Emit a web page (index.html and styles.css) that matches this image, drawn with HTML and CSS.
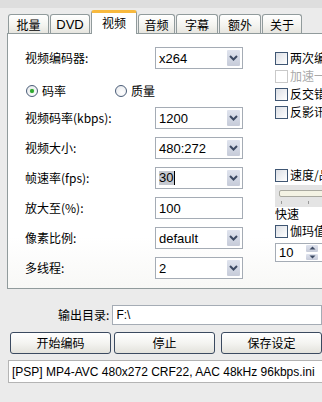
FILE: index.html
```html
<!DOCTYPE html>
<html>
<head>
<meta charset="utf-8">
<link rel="stylesheet" href="styles.css">
</head>
<body>
<div class="window">
  <div class="tabs">
    <div class="tab w41">批量</div>
    <div class="tab w40 latin">DVD</div>
    <div class="tab active">视频</div>
    <div class="tab w37">音频</div>
    <div class="tab w42">字幕</div>
    <div class="tab w42">额外</div>
    <div class="tab w40">关于</div>
  </div>
  <div class="panel">
    <div class="left">
      <div class="row">
        <span class="label">视频编码器:</span>
        <div class="combo"><span class="val">x264</span><span class="btn"><svg width="9" height="6" viewBox="0 0 9 6"><path d="M1 1 L4.5 4.5 L8 1" fill="none" stroke="#3d4a63" stroke-width="2"/></svg></span></div>
      </div>
      <div class="radios">
        <span class="radio on"></span><span class="rlabel">码率</span>
        <span class="radio second"></span><span class="rlabel">质量</span>
      </div>
      <div class="row r1">
        <span class="label">视频码率(kbps):</span>
        <div class="combo"><span class="val">1200</span><span class="btn"><svg width="9" height="6" viewBox="0 0 9 6"><path d="M1 1 L4.5 4.5 L8 1" fill="none" stroke="#3d4a63" stroke-width="2"/></svg></span></div>
      </div>
      <div class="row">
        <span class="label">视频大小:</span>
        <div class="combo"><span class="val">480:272</span><span class="btn"><svg width="9" height="6" viewBox="0 0 9 6"><path d="M1 1 L4.5 4.5 L8 1" fill="none" stroke="#3d4a63" stroke-width="2"/></svg></span></div>
      </div>
      <div class="row">
        <span class="label">帧速率(fps):</span>
        <div class="combo"><span class="val"><span class="sel">30</span><span class="caret"></span></span><span class="btn"><svg width="9" height="6" viewBox="0 0 9 6"><path d="M1 1 L4.5 4.5 L8 1" fill="none" stroke="#3d4a63" stroke-width="2"/></svg></span></div>
      </div>
      <div class="row">
        <span class="label">放大至(%):</span>
        <div class="combo"><span class="val">100</span></div>
      </div>
      <div class="row">
        <span class="label">像素比例:</span>
        <div class="combo"><span class="val">default</span><span class="btn"><svg width="9" height="6" viewBox="0 0 9 6"><path d="M1 1 L4.5 4.5 L8 1" fill="none" stroke="#3d4a63" stroke-width="2"/></svg></span></div>
      </div>
      <div class="row">
        <span class="label">多线程:</span>
        <div class="combo"><span class="val">2</span><span class="btn"><svg width="9" height="6" viewBox="0 0 9 6"><path d="M1 1 L4.5 4.5 L8 1" fill="none" stroke="#3d4a63" stroke-width="2"/></svg></span></div>
      </div>
    </div>
    <div class="right">
      <div class="chk"><span class="box"></span><span>两次编码</span></div>
      <div class="chk disabled"><span class="box"></span><span>加速一次</span></div>
      <div class="chk"><span class="box"></span><span>反交错</span></div>
      <div class="chk"><span class="box"></span><span>反影讯</span></div>
      <div class="chk speed"><span class="box"></span><span>速度/品质</span></div>
      <div class="slider">
        <div class="track"></div>
        <div class="ticks"><span class="tick t1"></span><span class="tick t2"></span></div>
      </div>
      <div class="fast">快速</div>
      <div class="chk gamma"><span class="box"></span><span>伽玛值</span></div>
      <div class="spin"><span class="val">10</span><span class="spinbtn"><span class="up"><svg width="7" height="4" viewBox="0 0 7 4"><path d="M0.5 3.5 L3.5 0.5 L6.5 3.5Z" fill="#3d4a63"/></svg></span><span class="dn"><svg width="7" height="4" viewBox="0 0 7 4"><path d="M0.5 0.5 L3.5 3.5 L6.5 0.5Z" fill="#3d4a63"/></svg></span></span></div>
    </div>
  </div>
  <div class="outrow">
    <span class="outlabel">输出目录:</span>
    <div class="outinput">F:\</div>
  </div>
  <div class="buttons">
    <div class="button">开始编码</div>
    <div class="button b2">停止</div>
    <div class="button b3">保存设定</div>
  </div>
  <div class="preset">[PSP] MP4-AVC 480x272 CRF22, AAC 48kHz 96kbps.ini</div>
</div>
</body>
</html>
```
FILE: styles.css
```css
* { box-sizing: border-box; }
html, body { margin: 0; padding: 0; }
body {
  font-family: "Liberation Sans", "Noto Sans CJK SC", sans-serif;
  font-size: 12px;
  color: #000;
}
.window {
  width: 322px;
  height: 402px;
  overflow: hidden;
  background: #ebebeb;
  border-top: 8px solid #dedede;
  padding-top: 2px;
}
.tabs {
  display: flex;
  align-items: flex-end;
  gap: 1px;
  padding-left: 8px;
  height: 23px;
  position: relative;
  z-index: 2;
}
.tab {
  height: 19px;
  border: 1px solid #919b9c;
  border-bottom: none;
  border-radius: 3px 3px 0 0;
  background: linear-gradient(#ffffff, #f3f3ef 60%, #e6e5df);
  display: flex;
  align-items: center;
  justify-content: center;
  font-family: "Noto Sans CJK SC", sans-serif;
  font-size: 12px;
  line-height: 1;
  padding-top: 1px;
}
.tab.latin { font-family: "Liberation Sans", sans-serif; font-size: 13px; }
.w41 { width: 41px; }
.w40 { width: 40px; }
.w37 { width: 37px; }
.w42 { width: 42px; }
.tab.active {
  width: 46px;
  height: 24px;
  margin-bottom: -1px;
  background: #fff;
  border-top: 3px solid #f8b93e;
  border-radius: 3px 3px 0 0;
  padding-top: 0;
  padding-bottom: 2px;
}
.panel {
  margin-left: 7px;
  width: 340px;
  height: 256px;
  border: 1px solid #919b9c;
  background: linear-gradient(#ffffff, #ffffff 80%, #f8f8f6);
  display: flex;
  position: relative;
  z-index: 1;
}
.left {
  width: 267px;
  padding-left: 17px;
  padding-top: 13px;
  display: flex;
  flex-direction: column;
}
.row {
  display: flex;
  align-items: center;
  height: 22px;
  margin-bottom: 8px;
}
.row.r1 { margin-top: 5px; }
.label {
  width: 130px;
  font-family: "Noto Sans CJK SC", sans-serif;
  font-size: 12px;
  line-height: 1;
}
.combo {
  width: 88px;
  height: 22px;
  border: 1px solid #a5acb5;
  background: #fff;
  display: flex;
  align-items: stretch;
}
.combo .val {
  flex: 1;
  display: flex;
  align-items: center;
  padding-left: 3px;
  font-size: 13px;
  font-family: "Liberation Sans", sans-serif;
}
.sel {
  background: #c5c8cf;
  padding: 0 1px 0 0;
  line-height: 14px;
}
.caret {
  width: 1px;
  height: 14px;
  background: #000;
}
.btn {
  width: 15px;
  margin: 1px;
  border: 1px solid #fff;
  border-radius: 2px;
  background: linear-gradient(#dfe3ee, #c6cbd9);
  display: flex;
  align-items: center;
  justify-content: center;
}
.radios {
  display: flex;
  align-items: center;
  height: 22px;
  margin-top: 3px;
  padding-left: 1px;
}
.radio {
  width: 12px;
  height: 12px;
  border-radius: 50%;
  border: 1px solid #4a5d78;
  background: radial-gradient(circle at 60% 65%, #ffffff, #e4e6ea);
  position: relative;
}
.radio.on::after {
  content: "";
  position: absolute;
  left: 3px;
  top: 3px;
  width: 4px;
  height: 4px;
  border-radius: 50%;
  background: #2fa82f;
  box-shadow: 0 0 1px #5bc65b;
}
.radio.second { margin-left: 49px; }
.rlabel {
  margin-left: 4px;
  font-family: "Noto Sans CJK SC", sans-serif;
  line-height: 1;
}
.right {
  padding-top: 15px;
  display: flex;
  flex-direction: column;
  white-space: nowrap;
}
.chk {
  display: flex;
  align-items: center;
  height: 18px;
  font-family: "Noto Sans CJK SC", sans-serif;
  font-size: 12px;
  line-height: 1;
}
.chk .box {
  width: 13px;
  height: 13px;
  border: 1px solid #3f5673;
  background: linear-gradient(135deg, #dcdfe5, #ffffff);
  margin-right: 2px;
  flex: none;
}
.chk.disabled { color: #a9a9a9; }
.chk.disabled .box { border-color: #c9c9c9; background: #fff; }
.chk.speed { margin-top: 45px; }
.slider {
  width: 60px;
  height: 22px;
  background: #e4e4e4;
  margin-top: 1px;
  padding: 5px 0 0 4px;
  position: relative;
}
.track {
  height: 7px;
  border: 1px solid #a9a9a0;
  border-radius: 2px;
  background: #f4f3e4;
}
.tick {
  position: absolute;
  top: 16px;
  width: 1px;
  height: 3px;
  background: #999;
}
.t1 { left: 6px; }
.t2 { left: 33px; }
.fast {
  height: 14px;
  display: flex;
  align-items: center;
  font-family: "Noto Sans CJK SC", sans-serif;
  line-height: 1;
}
.chk.gamma { margin-top: 1px; }
.spin {
  margin-top: 3px;
  width: 60px;
  height: 19px;
  border: 1px solid #a5acb5;
  background: #fff;
  display: flex;
}
.spin .val {
  width: 29px;
  padding-left: 3px;
  display: flex;
  align-items: center;
  font-size: 13px;
}
.spinbtn {
  width: 14px;
  display: flex;
  flex-direction: column;
}
.spinbtn span {
  flex: 1;
  border: 1px solid #fff;
  border-radius: 2px;
  background: linear-gradient(#dfe3ee, #c6cbd9);
  display: flex;
  align-items: center;
  justify-content: center;
}
.outrow {
  display: flex;
  align-items: center;
  height: 20px;
  margin-top: 16px;
}
.outlabel {
  width: 116px;
  text-align: right;
  padding-right: 1px;
  font-family: "Noto Sans CJK SC", sans-serif;
  line-height: 1;
}
.outinput {
  margin-left: 2px;
  width: 220px;
  height: 20px;
  border: 1px solid #a5acb5;
  background: #fff;
  padding-left: 3px;
  display: flex;
  align-items: center;
  font-size: 12px;
}
.buttons {
  display: flex;
  margin-top: 7px;
  padding-left: 10px;
}
.button {
  width: 102px;
  height: 22px;
  border: 1px solid #3b4a60;
  border-radius: 3px;
  background: linear-gradient(#ffffff, #f4f4f1 50%, #e3e2dc);
  display: flex;
  align-items: center;
  justify-content: center;
  font-family: "Noto Sans CJK SC", sans-serif;
  line-height: 1;
}
.b2 { margin-left: 3px; }
.b3 { margin-left: 6px; }
.preset {
  margin-top: 6px;
  margin-left: 8px;
  width: 330px;
  height: 23px;
  border: 1px solid #b4b4b4;
  background: #fff;
  padding-left: 3px;
  display: flex;
  align-items: center;
  font-size: 12px;
  white-space: nowrap;
}
```
